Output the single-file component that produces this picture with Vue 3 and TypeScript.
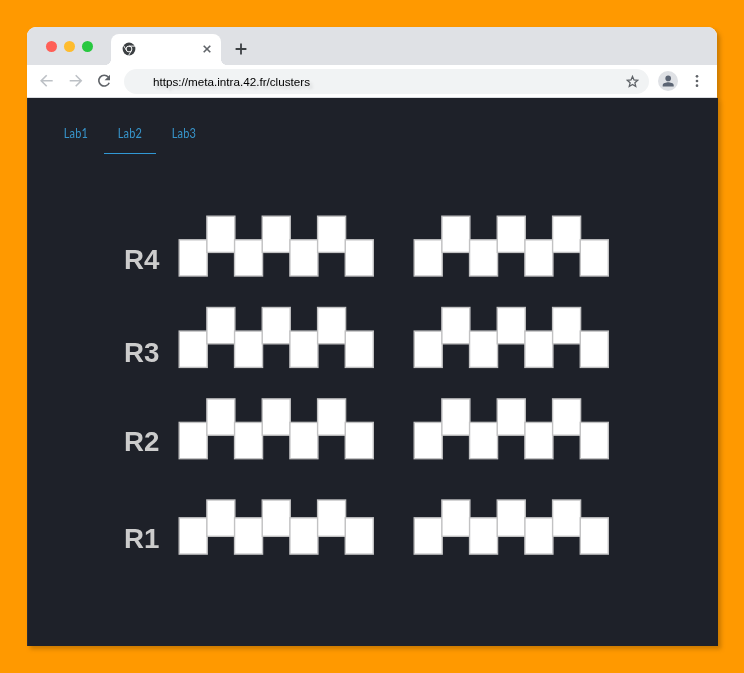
<script setup lang="ts">
import { ref } from 'vue'

interface ClusterRow {
  name: string
  top: number
  lower: number
  height: number
}

const labs = ['Lab1', 'Lab2', 'Lab3']
const active = ref('Lab2')
const address = ref('https://meta.intra.42.fr/clusters')
const seatPitch = 27.68

const rows: ClusterRow[] = [
  { name: 'R4', top: 1.2, lower: 24.8, height: 36.2 },
  { name: 'R3', top: 1.5, lower: 25.1, height: 36.3 },
  { name: 'R2', top: 0.9, lower: 24.4, height: 36.3 },
  { name: 'R1', top: 1.0, lower: 18.8, height: 36.3 },
]
</script>

<template>
  <main class="desktop">
    <section class="window">
      <header class="chrome">
        <div class="tabbar">
          <div class="lights"><i class="red" /><i class="yellow" /><i class="green" /></div>
          <div class="tab">
            <svg class="logo" viewBox="0 0 14 14">
              <circle cx="7" cy="7" r="6.4" fill="#3c4043" />
              <circle cx="7" cy="7" r="2.9" fill="#3c4043" stroke="#fff" stroke-width="1" />
              <path d="M7 4.1h6M4.5 8.5 1.6 3.5M9.5 8.5l-3 5" stroke="#fff" stroke-width=".9" />
            </svg>
            <svg class="close" viewBox="0 0 10 10"><path d="m1.7 1.7 6.6 6.6m0-6.6L1.7 8.3" /></svg>
          </div>
          <svg class="plus" viewBox="0 0 12 12"><path d="M6 .6v10.8M.6 6h10.8" /></svg>
        </div>
        <nav class="toolbar">
          <svg class="arrow" viewBox="0 0 14 14"><path d="M12.7 6.8H1.5M6.7 1.3 1.2 6.8l5.5 5.5" /></svg>
          <svg class="arrow forward" viewBox="0 0 14 14"><path d="M.7 6.8h11.2M6.7 1.3l5.5 5.5-5.5 5.5" /></svg>
          <svg class="reload" viewBox="0 0 14 14">
            <path d="M11.3 3.1A5.4 5.4 0 1 0 12.2 8.7" fill="none" stroke="#5f6368" stroke-width="1.6" />
            <path d="M13 .8v5.4H7.6z" fill="#5f6368" />
          </svg>
          <div class="address">
            <span class="url">{{ address }}</span>
            <svg class="star" viewBox="0 0 14 14"><path d="m7 1.5 1.6 3.8 4.1.4-3.1 2.7.9 4L7 10.3l-3.5 2.1.9-4-3.1-2.7 4.1-.4z" /></svg>
          </div>
          <svg class="profile" viewBox="0 0 20 20">
            <circle cx="10" cy="10" r="10" fill="#dfe1e5" />
            <circle cx="10.2" cy="7.4" r="2.8" fill="#5b6473" />
            <path d="M4.7 15.4v-1.3c0-1.9 3.7-2.8 5.5-2.8s5.5.9 5.5 2.8v1.3z" fill="#5b6473" />
          </svg>
          <svg class="dots" viewBox="0 0 4 14"><circle cx="2" cy="2.3" r="1.35" /><circle cx="2" cy="7" r="1.35" /><circle cx="2" cy="11.7" r="1.35" /></svg>
        </nav>
      </header>
      <div class="page">
        <nav class="labs">
          <a v-for="lab in labs" :key="lab" :class="{ active: lab === active }" @click="active = lab"><span>{{ lab }}</span></a>
        </nav>
        <div class="map">
          <div v-for="row in rows" :key="row.name" class="row" :class="row.name.toLowerCase()">
            <h2>{{ row.name }}</h2>
            <svg v-for="block in 2" :key="block" class="seats" viewBox="0 0 197 64">
              <rect
                v-for="n in 7" :key="n"
                :x="1.2 + (n - 1) * seatPitch"
                :y="n % 2 ? row.lower : row.top"
                width="28" :height="row.height"
              />
            </svg>
          </div>
        </div>
      </div>
    </section>
  </main>
</template>

<style>
body { margin: 0; }
</style>

<style scoped>
* { box-sizing: border-box; }
svg { display: block; flex: none; }
.desktop { width: 744px; height: 673px; padding: 27px 26px 27px 27px; background: #ff9900; font-family: "Liberation Sans", Arial, sans-serif; overflow: hidden; }
.window { width: 691px; height: 619px; filter: drop-shadow(3px 3px 2px rgba(60, 40, 0, .28)); }
.chrome { width: 690px; height: 71px; overflow: hidden; border-radius: 9px 9px 0 0; background: #fff; border-bottom: 1px solid #dadce0; }
.tabbar { display: flex; height: 38px; background: #dfe1e5; }
.lights { display: flex; gap: 7px; padding: 14px 0 0 19px; width: 84px; }
.lights i { width: 11px; height: 11px; border-radius: 50%; }
.red { background: #ff5f57; }
.yellow { background: #febc2e; }
.green { background: #28c840; }
.tab { position: relative; display: flex; justify-content: space-between; width: 110.4px; height: 31px; margin-top: 7px; padding: 8px 9.4px 0 11px; background: #fff; border-radius: 8px 8px 0 0; }
.tab::before, .tab::after { content: ""; position: absolute; bottom: 0; width: 6px; height: 6px; }
.tab::before { left: -6px; background: radial-gradient(circle at 0 0, transparent 5.7px, #fff 6.2px); }
.tab::after { right: -6px; background: radial-gradient(circle at 100% 0, transparent 5.7px, #fff 6.2px); }
.logo { width: 14px; height: 14px; }
.logo path { fill: none; }
.close { width: 10px; height: 10px; margin-top: 2px; fill: none; stroke: #5f6368; stroke-width: 1.6; }
.plus { width: 12px; height: 12px; margin: 16px 0 0 13.6px; fill: none; stroke: #3c4043; stroke-width: 1.8; }
.toolbar { display: flex; align-items: center; height: 32px; padding-left: 13px; }
.arrow { width: 14px; height: 14px; fill: none; stroke: #bdc1c6; stroke-width: 1.6; }
.forward { margin-left: 15px; }
.reload { width: 14px; height: 14px; margin-left: 14px; }
.address { display: flex; align-items: center; width: 525px; height: 25px; margin-left: 13px; padding: 0 10px 0 29px; border-radius: 13px; background: #f1f3f4; }
.url { flex: 1; font-size: 11.68px; line-height: 15px; color: #000; padding-top: 1px; text-shadow: 3px 3px 3px rgba(0, 0, 0, .13); }
.star { width: 13px; height: 13px; fill: none; stroke: #5f6368; stroke-width: 1.4; }
.profile { width: 20px; height: 20px; margin-left: 9px; }
.dots { width: 4px; height: 14px; margin-left: 17px; fill: #5f6368; }
.page { width: 691px; height: 548px; background: #1e2129; border-left: 1px solid #292d36; }
.labs { display: flex; gap: 2px; height: 57px; padding: 16px 0 0 22px; }
.labs a { display: flex; justify-content: center; width: 52px; height: 40px; padding-top: 12px; border-bottom: 1px solid transparent; color: #3794ca; font: 12.5px/16px Lato, sans-serif; cursor: pointer; }
.labs span { transform: translateY(.4px) scaleX(.88); letter-spacing: .2px; }
.labs .active { border-color: #3198d4; }
.map { padding: 60px 0 0 96px; }
.row { display: flex; height: 91px; }
.row h2 { width: 54px; margin: 29px 0 0; color: #ccc; font-size: 27.7px; line-height: 32px; font-weight: bold; }
.r3 h2 { margin-top: 31px; }
.r2 { margin-top: 1px; }
.r2 h2 { margin-top: 28px; }
.r1 { margin-top: 10px; }
.r1 h2 { margin-top: 24px; }
.seats { width: 197px; height: 64px; }
.seats + .seats { margin-left: 38.3px; }
.seats rect { fill: #fff; stroke: #c2c2c3; stroke-width: 1.4; }
</style>
